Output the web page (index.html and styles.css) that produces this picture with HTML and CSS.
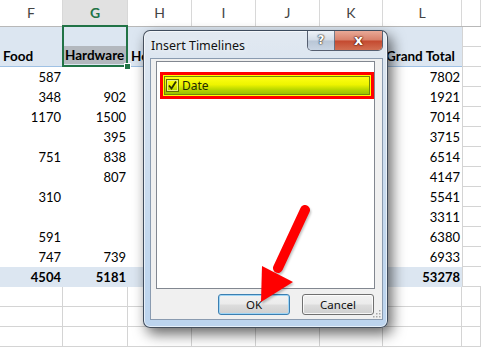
FILE: index.html
```html
<!DOCTYPE html>
<html lang="en">
<head>
    <meta charset="UTF-8">
    <title>Insert Timelines</title>
    <link rel="stylesheet" href="styles.css">
</head>
<body>
    <div class="sheet">
        <div class="colheads">
            <div class="ch">F</div>
            <div class="ch sel">G</div>
            <div class="ch">H</div>
            <div class="ch">I</div>
            <div class="ch">J</div>
            <div class="ch">K</div>
            <div class="ch">L</div>
            <div class="ch"></div>
        </div>

        <div class="phead">
            <div class="pc"></div>
            <div class="pc gsel"><span class="hw">Hardware</span></div>
            <div class="pc"></div>
            <div class="pc"></div>
            <div class="pc"></div>
            <div class="pc"></div>
            <div class="pc"></div>
            <div class="m"></div>
            <div class="pc lbl">Food</div>
            <div class="pc lbl">Ho</div>
            <div class="pc lbl"></div>
            <div class="pc lbl"></div>
            <div class="pc lbl"></div>
            <div class="pc lbl">Grand Total</div>
            <div class="m"></div>
        </div>

        <div class="row"><div>587</div><div></div><div></div><div></div><div></div><div></div><div>7802</div><div class="m"></div></div>
        <div class="row"><div>348</div><div>902</div><div></div><div></div><div></div><div></div><div>1921</div><div class="m"></div></div>
        <div class="row"><div>1170</div><div>1500</div><div></div><div></div><div></div><div></div><div>7014</div><div class="m"></div></div>
        <div class="row"><div></div><div>395</div><div></div><div></div><div></div><div></div><div>3715</div><div class="m"></div></div>
        <div class="row"><div>751</div><div>838</div><div></div><div></div><div></div><div></div><div>6514</div><div class="m"></div></div>
        <div class="row"><div></div><div>807</div><div></div><div></div><div></div><div></div><div>4147</div><div class="m"></div></div>
        <div class="row"><div>310</div><div></div><div></div><div></div><div></div><div></div><div>5541</div><div class="m"></div></div>
        <div class="row"><div></div><div></div><div></div><div></div><div></div><div></div><div>3311</div><div class="m"></div></div>
        <div class="row"><div>591</div><div></div><div></div><div></div><div></div><div></div><div>6380</div><div class="m"></div></div>
        <div class="row"><div>747</div><div>739</div><div></div><div></div><div></div><div></div><div>6933</div><div class="m"></div></div>
        <div class="row total"><div>4504</div><div>5181</div><div></div><div></div><div></div><div></div><div>53278</div><div class="m"></div></div>
        <div class="row empty"><div></div><div></div><div></div><div></div><div></div><div></div><div></div><div></div></div>
        <div class="row empty"><div></div><div></div><div></div><div></div><div></div><div></div><div></div><div></div></div>
        <div class="row empty"><div></div><div></div><div></div><div></div><div></div><div></div><div></div><div></div></div>
    </div>

    <div class="dlg">
        <div class="titlebar">
            <span class="title">Insert Timelines</span>
            <div class="capbtns">
                <div class="help">?</div>
                <div class="close">x</div>
            </div>
        </div>
        <div class="client">
            <div class="listbox">
                <div class="hl">
                    <div class="item">
                        <span class="chk">
                            <svg width="11" height="11" viewBox="0 0 11 11"><path d="M2 5.5 L4.5 8.5 L9 1.5" fill="none" stroke="#2a3000" stroke-width="1.8"/></svg>
                        </span>
                        <span class="item-text">Date</span>
                    </div>
                </div>
            </div>
            <div class="btnrow">
                <button class="btn default">OK</button>
                <button class="btn">Cancel</button>
            </div>
            <svg class="grip" width="8" height="8" viewBox="0 0 8 8">
                <rect x="6" y="0" width="1.5" height="1.5" fill="#a8a8a8"/>
                <rect x="3" y="3" width="1.5" height="1.5" fill="#a8a8a8"/>
                <rect x="6" y="3" width="1.5" height="1.5" fill="#a8a8a8"/>
                <rect x="0" y="6" width="1.5" height="1.5" fill="#a8a8a8"/>
                <rect x="3" y="6" width="1.5" height="1.5" fill="#a8a8a8"/>
                <rect x="6" y="6" width="1.5" height="1.5" fill="#a8a8a8"/>
            </svg>
        </div>
    </div>

    <!-- annotation arrow pointing at OK -->
    <svg class="arrow" width="481" height="348" viewBox="0 0 481 348">
        <line x1="305" y1="210" x2="278" y2="268" stroke="#ff0000" stroke-width="10" stroke-linecap="round"/>
        <polygon points="262,266 293,282 261,302" fill="#ff0000"/>
    </svg>
</body>
</html>
```

FILE: styles.css
```css
body {
    margin: 0;
    width: 481px;
    height: 348px;
    overflow: hidden;
    position: relative;
    background: #ffffff;
    font-family: Lato, "Liberation Sans", sans-serif;
    font-size: 13px;
    color: #000;
}
.sheet {
    --cols: 63px 65px 64px 64px 64px 63px 79px 1fr;
}
.sheet div {
    box-sizing: border-box;
}
.colheads {
    display: grid;
    grid-template-columns: var(--cols);
    height: 27px;
    border-bottom: 1px solid #b8b8b8;
}
.ch {
    border-right: 1px solid #d8d8d8;
    text-align: center;
    line-height: 26px;
    font-size: 14px;
    color: #444;
}
.ch.sel {
    background: #e1e1e1;
    color: #217346;
    font-weight: bold;
}
.phead {
    display: grid;
    grid-template-columns: var(--cols);
    grid-template-rows: 20px 20px;
}
.pc {
    background: #dce6f1;
}
.lbl {
    border-bottom: 1px solid #9fc1e4;
    font-weight: bold;
    font-size: 13.5px;
    line-height: 19px;
    padding-left: 3px;
    white-space: nowrap;
    overflow: hidden;
}
.gsel {
    grid-row: span 2;
    border: 2px solid #217346;
    margin: -2px 0 0 -1px;
    position: relative;
    display: flex;
    align-items: flex-end;
}
.gsel::after {
    content: "";
    position: absolute;
    right: -5px;
    bottom: -5px;
    width: 5px;
    height: 5px;
    background: #217346;
    border: 1px solid #fff;
}
.hw {
    width: 100%;
    height: 18px;
    line-height: 18px;
    background: #b3b8be;
    font-weight: bold;
    font-size: 13.5px;
    padding-left: 1px;
    margin-bottom: 1px;
    white-space: nowrap;
}
.m {
    border-left: 1px solid #d4d4d4;
    border-bottom: 1px solid #d4d4d4;
}
.row {
    display: grid;
    grid-template-columns: var(--cols);
    height: 20px;
    line-height: 20px;
}
.row > div {
    text-align: right;
    padding-right: 2px;
}
.total > div:not(.m) {
    background: #dce6f1;
    font-weight: bold;
}
.empty > div {
    border-right: 1px solid #d4d4d4;
    border-bottom: 1px solid #d4d4d4;
}

/* dialog */
.dlg {
    position: absolute;
    left: 143px;
    top: 30px;
    width: 245px;
    height: 298px;
    box-sizing: border-box;
    border: 1px solid rgba(30, 40, 55, 0.8);
    border-radius: 7px;
    background: linear-gradient(to bottom, #e2e9f1, #d4e1ef 25%, #c3d8ee 70%, #bcd4ee);
    box-shadow: inset 0 0 0 1px rgba(255, 255, 255, 0.6), 4px 6px 14px rgba(0, 0, 0, 0.6);
    display: flex;
    flex-direction: column;
    padding: 0 4px 7px 6px;
    font-family: "Noto Sans", "Open Sans", sans-serif;
    font-size: 11.5px;
    color: #1a1a1a;
}
.titlebar {
    height: 27px;
    display: flex;
    align-items: flex-start;
}
.title {
    margin: 6px 0 0 1px;
    font-size: 12.5px;
    color: #111;
    text-shadow: 0 0 6px #fff;
}
.capbtns {
    margin-left: auto;
    display: flex;
    height: 19px;
    border: 1px solid rgba(40, 50, 70, 0.75);
    border-top: none;
    border-radius: 0 0 5px 5px;
    overflow: hidden;
}
.help, .close {
    height: 19px;
    text-align: center;
    line-height: 18px;
    font-weight: bold;
    color: #fff;
    font-family: "DejaVu Sans", sans-serif;
}
.help {
    width: 26px;
    font-size: 12px;
    background: linear-gradient(to bottom, #eef2f7, #d3dce7 48%, #b9c6d6 52%, #c9d5e3);
    border-right: 1px solid rgba(40, 50, 70, 0.6);
    text-shadow: 0 0 1px #333, 0 0 1px #333, 0 0 2px #333;
}
.close {
    width: 47px;
    font-size: 14px;
    background: linear-gradient(to bottom, #e9a997, #d8806a 48%, #c4492f 52%, #d26f52);
    text-shadow: 0 0 1px #4a1200, 0 0 1px #4a1200, 0 0 2px #4a1200;
}
.client {
    flex: 1;
    position: relative;
    border: 1px solid #8a9bb0;
    background: #f0f0f0;
    display: flex;
    flex-direction: column;
    padding: 2px 7px 4px 5px;
}
.listbox {
    height: 228px;
    box-sizing: border-box;
    border: 1px solid #828790;
    background: #fff;
    padding: 10px 0 0 3px;
}
.hl {
    height: 27px;
    box-sizing: border-box;
    border: 3px solid #ff0000;
    padding: 1px;
    background: #ffff00;
}
.item {
    height: 19px;
    box-sizing: border-box;
    border: 1px solid #72880a;
    background: linear-gradient(to bottom, #ffff14, #eef400 45%, #b6d600 75%, #98c400);
    display: flex;
    align-items: center;
    padding-left: 1px;
}
.chk {
    width: 13px;
    height: 13px;
    box-sizing: border-box;
    border: 1px solid #5f6e00;
    box-shadow: inset 0 0 0 1px #e9f080;
    display: flex;
    align-items: center;
    justify-content: center;
}
.item-text {
    margin-left: 3px;
    font-size: 12px;
    color: #262a00;
}
.btnrow {
    display: flex;
    justify-content: flex-end;
    gap: 12px;
    margin-top: 5px;
    padding-right: 1px;
}
.btn {
    width: 72px;
    height: 21px;
    box-sizing: border-box;
    border: 1px solid #707070;
    border-radius: 3px;
    background: linear-gradient(to bottom, #f2f2f2, #ebebeb 48%, #dddddd 52%, #cfcfcf);
    box-shadow: inset 0 0 0 1px rgba(255, 255, 255, 0.8);
    font-family: "Noto Sans", "Open Sans", sans-serif;
    font-size: 11.5px;
    color: #111;
    padding: 0;
}
.btn.default {
    border-color: #3c7fb1;
    box-shadow: inset 0 0 0 1px #9fd5f5;
}
.grip {
    position: absolute;
    right: 1px;
    bottom: 1px;
}
.arrow {
    position: absolute;
    left: 0;
    top: 0;
    pointer-events: none;
    filter: drop-shadow(1px 2px 1px rgba(0, 0, 0, 0.25));
}
```
